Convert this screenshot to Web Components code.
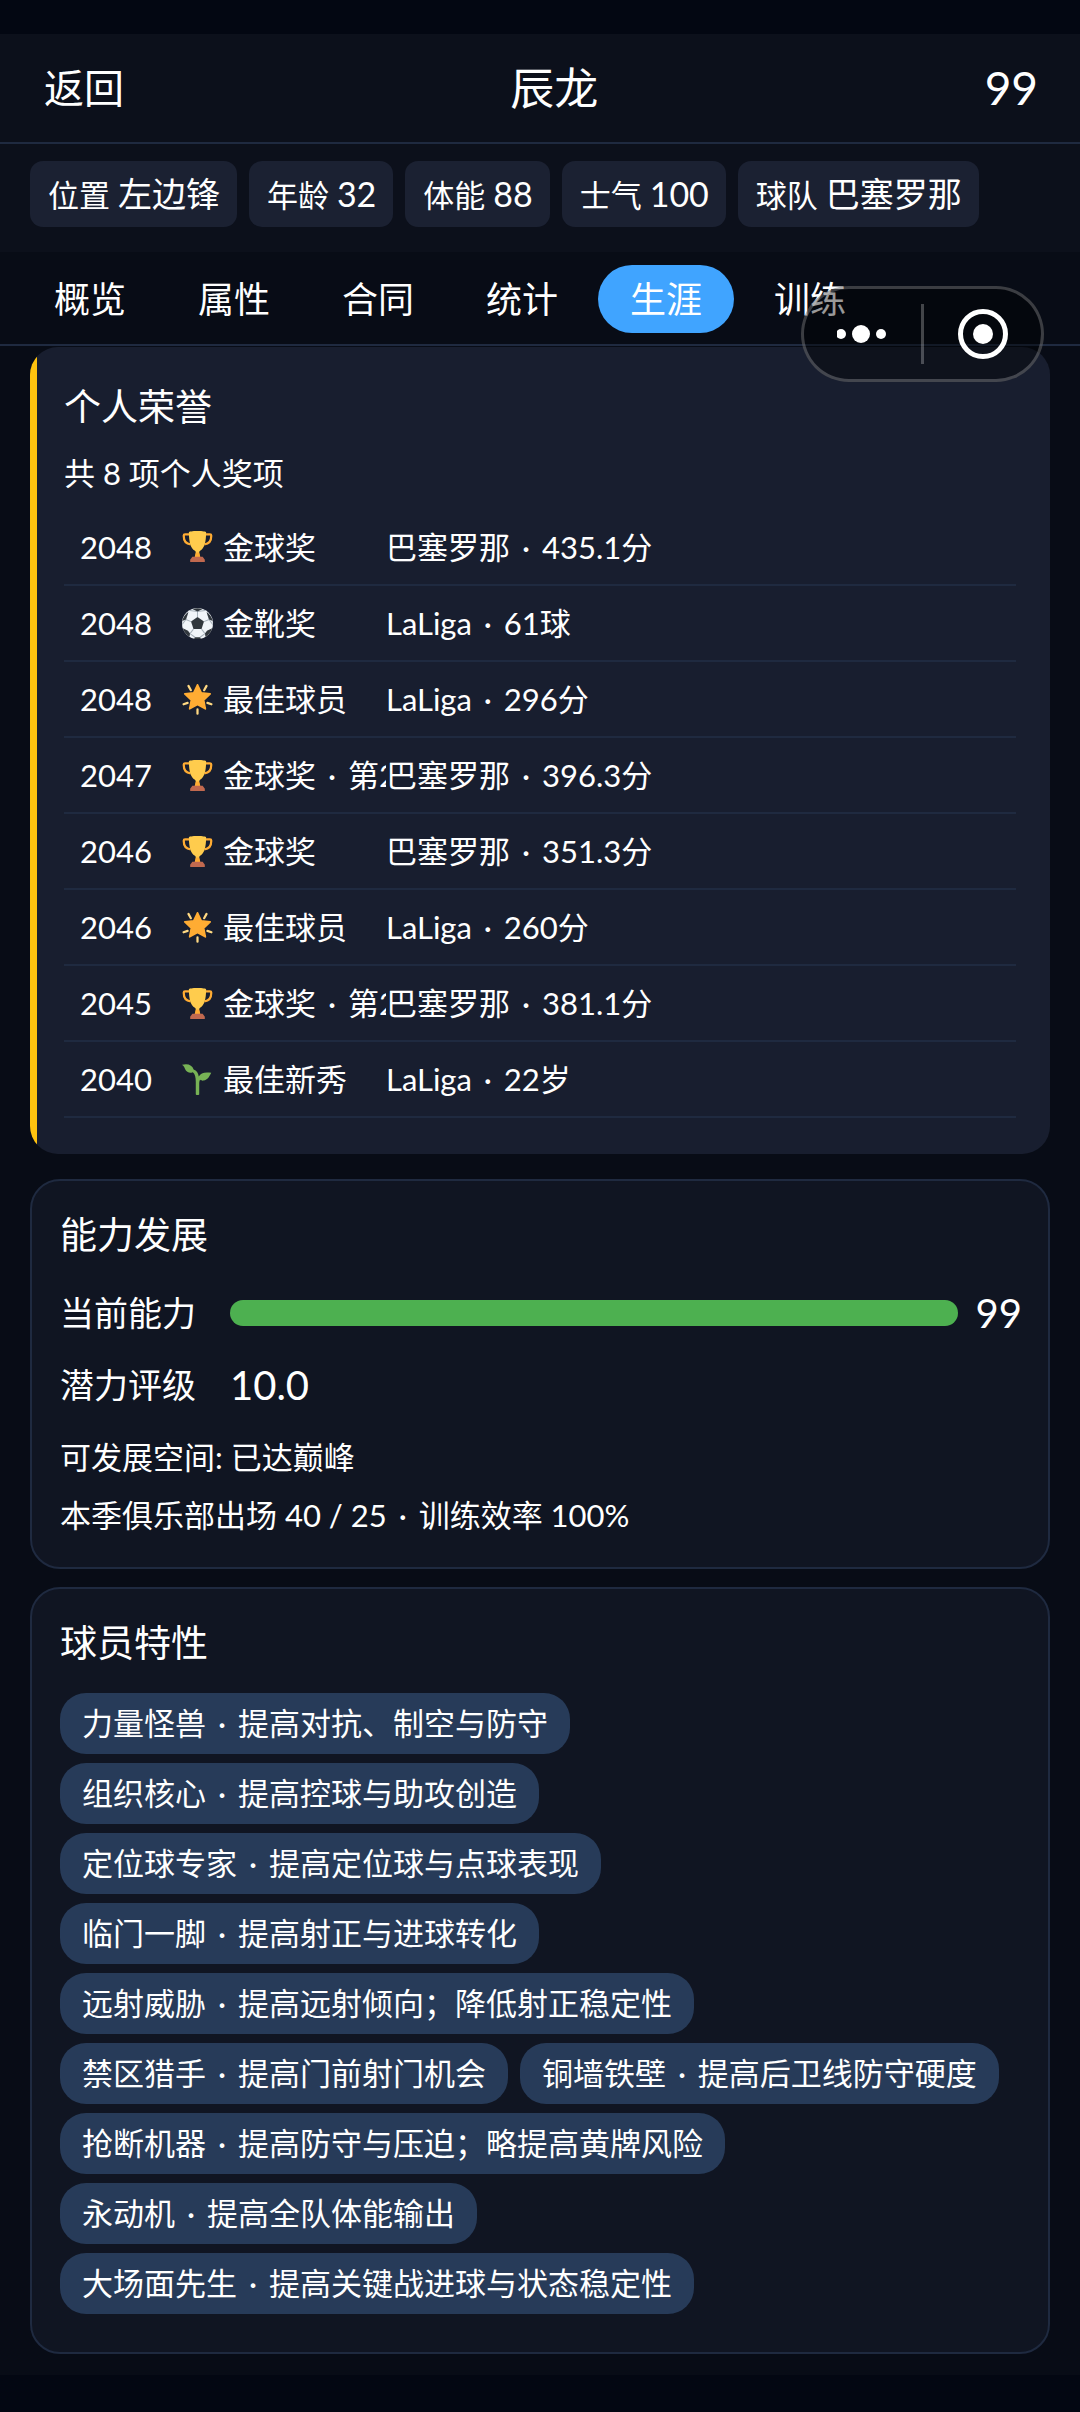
<!DOCTYPE html>
<html lang="zh-CN">
<head>
<meta charset="utf-8">
<meta name="viewport" content="width=device-width, initial-scale=1">
<title>辰龙 - 生涯</title>
<style>
  html, body { margin: 0; background: #030712; }
  body {
    --page: #080c16; --bar: #0c101b; --line: #1f2a40; --chip: #1b2132;
    --panel: #101522; --honor: #181e2f; --gold: #ffc30f; --trait: #273b59;
    --accent: #40a4ff; --good: #4db050;
    --fs-s: 31px; --fs-m: 34px; --fs-l: 37px; --fs-xl: 40px;
    color: #fff;
    font-family: Lato, "Noto Sans CJK SC", sans-serif;
    font-size: var(--fs-s);
    line-height: 44px;
  }
</style>
</head>
<body>
<player-page></player-page>

<script>
const define = (name, html, setup) => {
  const template = document.createElement('template');
  template.innerHTML = '<style>*{box-sizing:border-box}.sep{padding:0 4px}</style>' + html;
  customElements.define(name, class extends HTMLElement {
    connectedCallback() {
      if (this.shadowRoot) return;
      this.attachShadow({ mode: 'open' }).append(template.content.cloneNode(true));
      if (setup) setup(this, this.shadowRoot);
    }
  });
};

// Gives the middle dot between two facts some air on both sides.
const spaced = text => text.replace(/·/g, '<span class="sep">·</span>');

const icons = {
  trophy: `<path d="M9 7H3.500C2.500 7 2 7.500 2 8.500c0 6 2.500 9.500 8 10M27 7h5.500c1 0 1.500.5 1.500 1.500 0 6-2.500 9.500-8 10" transform="translate(0 -3)" fill="none" stroke="#ffac33" stroke-width="2.600"/>
    <path d="M8 1.500C8 .7 12 0 18 0s10 .7 10 1.500C28 13 26 20 21 23c-1 .7-1.200 2-1 3l1 5h-6l1-5c.2-1 0-2.300-1-3C10 20 8 13 8 1.500z" fill="#ffcc4d"/>
    <path d="M16 25h4l1.500 6h-7z" fill="#ffac33"/><path d="M12 30h12l2.500 3.500V36h-17v-2.500z" fill="#c1694f"/>`,
  ball: `<circle cx="18" cy="18" r="18" fill="#f1f5f9"/>
    <path d="M18 10.500l7.500 5.300-2.800 8.700h-9.400l-2.800-8.700z" fill="#31373d"/>
    <path d="M18 10.500V4M25.500 15.800l6-2.400M22.700 24.500l4 5.200M13.300 24.500l-4 5.200M10.500 15.800l-6-2.400M18 4l9-1M18 4L9 3M31.500 13.400l-2-8M31.500 13.400l4.300 6M26.700 29.700l6.300-4M26.700 29.700L21 34M9.300 29.700L15 34M9.300 29.700L3 25.700M4.500 13.400l2-8M4.500 13.400L.2 19" stroke="#a8b2bb" stroke-width="1.200" fill="none"/>
    <path d="M12 1.300L18 4l6-2.700C20 0 16 0 12 1.300zM28.500 4.500l3 8.900 4.200 1.600c-.8-4-3.500-8-7.200-10.500zM35 23.500l-6 3-2.300 3.200.5 3.800c3.500-2.200 6.500-5.500 7.800-10zM1 23.500l6 3 2.300 3.200-.5 3.800C5.300 31.300 2.300 28 1 23.500zM7.500 4.500l-3 8.900L.3 15c.8-4 3.500-8 7.200-10.500zM14 35.600l1-1.600h6l1 1.600c-2.500.6-5.500.6-8 0z" fill="#31373d"/>`,
  star: `<path d="M18 1l4.400 9.300 10.300 1.200-7.600 7.100 2 10.200L18 23.900l-9.100 4.900 2-10.200-7.600-7.100 10.300-1.200z" fill="#ffac33" stroke="#ffac33" stroke-width="2" stroke-linejoin="round"/>
    <path d="M7.500 2.200l2.800 5M28.500 2.200l-2.800 5M1.800 23.500l4.700-1.600M34.200 23.500l-4.700-1.600M18 29.500v5" stroke="#ffd983" stroke-width="2.600" stroke-linecap="round"/>`,
  sprout: `<path d="M0 1c7-2 12 .5 13.500 5.500 3.500 1 5.300 4 6 8C22 10.500 26 9 34 10.300 31.500 15 30 18.500 25 19.300c-2 .3-3.300-.3-4-1-.7 1-1 2.500-1 5V35c0 1.500-4 1.500-4 0V21c0-5.500-.8-9.500-3.500-11.500C9 11 6 9.500 4.500 7.500 3 5.500 3 3 0 1z" fill="#77b255"/>`
};

define('award-icon', `
  <style>:host{display:block;flex:none;width:31px;height:31px} svg{display:block;width:100%;height:100%}</style>
  <svg viewBox="0 0 36 36" aria-hidden="true"></svg>`,
  (host, root) => { root.querySelector('svg').innerHTML = icons[host.getAttribute('name')]; });

define('app-header', `
  <style>
    :host{display:block;background:var(--bar);border-bottom:2px solid var(--line)}
    header{display:flex;justify-content:space-between;align-items:center;height:108px;padding:0 42px 0 44px}
    button{all:unset;cursor:pointer;font-size:var(--fs-xl);line-height:52px}
    h1{margin:0;font-weight:400;font-size:44px;line-height:56px}
    output{font-size:46px;line-height:56px}
  </style>
  <header><button type="button">返回</button><h1><slot></slot></h1><output><slot name="rating"></slot></output></header>`);

define('info-chip', `
  <style>
    :host{display:block;padding:10px 17px 9px 18px;border-radius:13px;background:var(--chip);line-height:46px;white-space:nowrap}
    b{font-weight:400;font-size:var(--fs-m)}
  </style>
  <span></span> <b><slot></slot></b>`,
  (host, root) => { root.querySelector('span').textContent = host.getAttribute('label'); });

define('info-bar', `
  <style>:host{display:flex;flex-wrap:wrap;gap:12px;padding:17px 30px 25px;background:var(--bar)}</style><slot></slot>`);

define('tab-bar', `
  <style>
    :host{display:block;border-bottom:2px solid var(--line)}
    nav{display:flex;gap:8px;padding:13px 22px 11px;overflow:hidden}
    button{all:unset;flex:none;cursor:pointer;padding:8px 32px;border-radius:34px;font-size:36px;line-height:52px}
    button[aria-selected=true]{background:var(--accent)}
  </style>
  <nav role="tablist"></nav>`,
  (host, root) => {
    const nav = root.querySelector('nav');
    host.getAttribute('tabs').split(' ').forEach(name => {
      const b = document.createElement('button');
      b.type = 'button'; b.textContent = name; b.setAttribute('role', 'tab');
      b.setAttribute('aria-selected', name === host.getAttribute('active'));
      nav.append(b);
    });
  });

define('honor-card', `
  <style>
    :host{display:block;padding:34px 34px 36px;border-radius:28px;background:linear-gradient(to right,var(--gold) 7px,var(--honor) 7px)}
    h2{margin:0;font-weight:400;font-size:var(--fs-l);line-height:52px}
    p{margin:18px 0 14px}
    table{width:100%;border-collapse:collapse;table-layout:fixed}
    td{height:76px;padding:0;border-bottom:2px solid var(--line);white-space:nowrap}
    .year{width:118px;padding-left:16px}
    .award{width:204px}
    .award div{display:flex;align-items:center;gap:10px;overflow:hidden}
  </style>
  <h2>个人荣誉</h2><p></p><table><tbody></tbody></table>`,
  (host, root) => {
    const rows = [
      ['2048', 'trophy', '金球奖', '巴塞罗那 · 435.1分'],
      ['2048', 'ball', '金靴奖', 'LaLiga · 61球'],
      ['2048', 'star', '最佳球员', 'LaLiga · 296分'],
      ['2047', 'trophy', '金球奖 · 第2', '巴塞罗那 · 396.3分'],
      ['2046', 'trophy', '金球奖', '巴塞罗那 · 351.3分'],
      ['2046', 'star', '最佳球员', 'LaLiga · 260分'],
      ['2045', 'trophy', '金球奖 · 第2', '巴塞罗那 · 381.1分'],
      ['2040', 'sprout', '最佳新秀', 'LaLiga · 22岁']
    ];
    root.querySelector('p').textContent = `共 ${rows.length} 项个人奖项`;
    root.querySelector('tbody').innerHTML = rows.map(([year, icon, award, note]) =>
      `<tr><td class="year">${year}</td><td class="award"><div><award-icon name="${icon}"></award-icon><span>${spaced(award)}</span></div></td><td>${spaced(note)}</td></tr>`).join('');
  });

define('panel-card', `
  <style>
    :host{display:block;padding:28px 26px 28px 28px;border:2px solid var(--line);border-radius:30px;background:var(--panel)}
    h2{margin:0;font-weight:400;font-size:var(--fs-l);line-height:52px}
  </style>
  <h2></h2><slot></slot>`,
  (host, root) => { root.querySelector('h2').textContent = host.getAttribute('heading'); });

define('ability-stats', `
  <style>
    :host{display:block;padding-top:26px}
    .row{display:flex;align-items:center;height:52px;margin-bottom:20px}
    .label{flex:none;width:170px;font-size:var(--fs-m)}
    progress{flex:1;min-width:0;appearance:none;height:26px;margin-right:18px;border:0;border-radius:13px;overflow:hidden;background:var(--chip)}
    progress::-webkit-progress-bar{background:var(--chip)}
    progress::-webkit-progress-value{background:var(--good)}
    b{font-weight:400;font-size:var(--fs-xl)}
    p{margin:24px 0 0} p + p{margin:14px 0 2px}
  </style>
  <div class="row"><label class="label" for="now">当前能力</label><progress id="now" value="99" max="99"></progress><b>99</b></div>
  <div class="row"><span class="label">潜力评级</span><b>10.0</b></div>
  <p>可发展空间: 已达巅峰</p>
  <p>本季俱乐部出场 40 / 25 <span class="sep">·</span> 训练效率 100%</p>`);

define('trait-list', `
  <style>
    :host{display:block}
    ul{display:flex;flex-wrap:wrap;gap:9px 12px;margin:0;padding:24px 0 10px;list-style:none}
    li{padding:8px 22px 9px;border-radius:26px;background:var(--trait);white-space:nowrap}
  </style>
  <ul></ul>`,
  (host, root) => {
    root.querySelector('ul').innerHTML = [
      '力量怪兽 · 提高对抗、制空与防守', '组织核心 · 提高控球与助攻创造', '定位球专家 · 提高定位球与点球表现',
      '临门一脚 · 提高射正与进球转化', '远射威胁 · 提高远射倾向；降低射正稳定性', '禁区猎手 · 提高门前射门机会',
      '铜墙铁壁 · 提高后卫线防守硬度', '抢断机器 · 提高防守与压迫；略提高黄牌风险', '永动机 · 提高全队体能输出',
      '大场面先生 · 提高关键战进球与状态稳定性'
    ].map(t => `<li>${spaced(t)}</li>`).join('');
  });

define('capsule-menu', `
  <style>
    :host{position:absolute;top:286px;right:36px;display:flex;align-items:center;width:243px;height:96px;border:3px solid rgba(255,255,255,.22);border-radius:48px;background:rgba(0,0,0,.4);box-sizing:border-box}
    button{all:unset;flex:1;display:flex;align-items:center;justify-content:center;cursor:pointer}
    i{width:3px;height:60px;background:rgba(255,255,255,.25)}
    svg{display:block;fill:#fff}
  </style>
  <button type="button" aria-label="更多"><svg width="52" height="20" viewBox="0 0 52 20"><circle cx="4" cy="10" r="5"/><circle cx="24" cy="10" r="9"/><circle cx="44" cy="10" r="5"/></svg></button>
  <i></i>
  <button type="button" aria-label="关闭"><svg width="50" height="50" viewBox="0 0 50 50"><circle cx="25" cy="25" r="22.500" fill="none" stroke="#fff" stroke-width="5"/><circle cx="25" cy="25" r="10"/></svg></button>`);

define('player-page', `
  <style>
    :host{display:block;position:relative;padding:34px 0 38px}
    .app{background:var(--page)}
    main{display:flex;flex-direction:column;gap:18px;padding:1px 30px 21px}
    honor-card{margin-bottom:7px}
  </style>
  <div class="app">
    <app-header>辰龙<span slot="rating">99</span></app-header>
    <info-bar>
      <info-chip label="位置">左边锋</info-chip><info-chip label="年龄">32</info-chip><info-chip label="体能">88</info-chip><info-chip label="士气">100</info-chip><info-chip label="球队">巴塞罗那</info-chip>
    </info-bar>
    <tab-bar tabs="概览 属性 合同 统计 生涯 训练" active="生涯"></tab-bar>
    <main>
      <honor-card></honor-card>
      <panel-card heading="能力发展"><ability-stats></ability-stats></panel-card>
      <panel-card heading="球员特性"><trait-list></trait-list></panel-card>
    </main>
  </div>
  <capsule-menu></capsule-menu>`);
</script>
</body>
</html>
